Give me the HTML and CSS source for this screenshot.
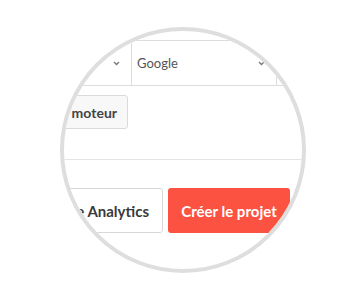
FILE: index.html
```html
<!DOCTYPE html>
<html lang="fr">
<head>
<meta charset="utf-8">
<link rel="stylesheet" href="styles.css">
</head>
<body>
<div class="lens">
  <div class="page">
    <div class="selects">
      <div class="sel sel-1">
        <span class="val">Moteur</span>
        <svg class="chev" width="7" height="5" viewBox="0 0 7 5"><path d="M1 1 L3.5 3.5 L6 1" fill="none" stroke="#777" stroke-width="1.4"/></svg>
      </div>
      <div class="sel sel-2">
        <span class="val">Google</span>
        <svg class="chev" width="7" height="5" viewBox="0 0 7 5"><path d="M1 1 L3.5 3.5 L6 1" fill="none" stroke="#777" stroke-width="1.4"/></svg>
      </div>
      <div class="sel sel-3"></div>
    </div>
    <div class="add-row">
      <button class="btn btn-light">Ajouter un moteur</button>
    </div>
    <div class="sep"></div>
    <div class="actions">
      <button class="btn btn-outline">Connecter Google Analytics</button>
      <button class="btn btn-red">Créer le projet</button>
    </div>
  </div>
</div>
</body>
</html>
```
FILE: styles.css
```css
* { box-sizing: border-box; }
html, body { margin: 0; padding: 0; background: #fff; }
body {
  width: 360px;
  height: 300px;
  overflow: hidden;
  font-family: "Lato", "Liberation Sans", sans-serif;
  padding: 27px 0 0 60px;
}
.lens {
  width: 246px;
  height: 246px;
  border: 4px solid #dedede;
  border-radius: 50%;
  overflow: hidden;
  background: #fff;
}
.page {
  width: 360px;
  height: 300px;
  margin: -31px 0 0 -64px;
  padding-top: 40px;
}
.selects {
  display: grid;
  grid-template-columns: 132px 145px 1fr;
  height: 46px;
  border-top: 1px solid #dcdcdc;
  border-bottom: 1px solid #dcdcdc;
}
.sel {
  display: flex;
  align-items: center;
  justify-content: space-between;
  border-right: 1px solid #dcdcdc;
  padding: 0 11px 0 5px;
}
.sel-1 .val { visibility: hidden; }
.sel-3 { border-right: none; }
.val {
  font-size: 13px;
  color: #555;
}
.chev { display: block; }
.add-row {
  display: flex;
  justify-content: flex-end;
  padding-right: 232px;
  margin-top: 9px;
}
.btn {
  font-family: inherit;
  font-weight: 700;
  border-radius: 3px;
  white-space: nowrap;
  flex: none;
}
.btn-light {
  height: 34px;
  background: #f8f8f8;
  border: 1px solid #dadada;
  color: #444;
  font-size: 14px;
  padding: 0 10px;
}
.sep {
  height: 1px;
  background: #e4e4e4;
  margin-top: 30px;
}
.actions {
  display: flex;
  justify-content: flex-end;
  gap: 5px;
  padding-right: 70px;
  margin-top: 28px;
}
.btn-outline {
  height: 45px;
  background: #fff;
  border: 1px solid #d8d8d8;
  color: #3a3a3a;
  font-size: 15px;
  padding: 0 13px;
}
.btn-red {
  height: 45px;
  width: 122px;
  background: #fb5241;
  border: none;
  color: #fff;
  font-size: 15px;
  padding: 0;
}
```
